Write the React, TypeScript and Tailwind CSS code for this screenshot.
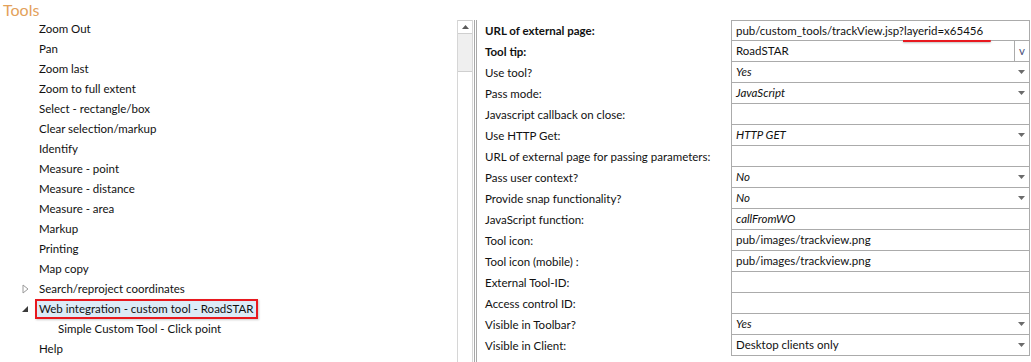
const treeItems = [
  { label: "Zoom Out" },
  { label: "Pan" },
  { label: "Zoom last" },
  { label: "Zoom to full extent" },
  { label: "Select - rectangle/box" },
  { label: "Clear selection/markup" },
  { label: "Identify" },
  { label: "Measure - point" },
  { label: "Measure - distance" },
  { label: "Measure - area" },
  { label: "Markup" },
  { label: "Printing" },
  { label: "Map copy" },
  { label: "Search/reproject coordinates", marker: "closed" },
  { label: "Web integration - custom tool - RoadSTAR", marker: "open", selected: true },
  { label: "Simple Custom Tool - Click point", child: true },
  { label: "Help" },
];

type Prop = {
  label: string;
  value?: string;
  bold?: boolean;
  italic?: boolean;
  dropdown?: boolean;
  button?: boolean;
  underline?: boolean;
};

const props: Prop[] = [
  { label: "URL of external page:", value: "pub/custom_tools/trackView.jsp?layerid=x65456", bold: true, underline: true },
  { label: "Tool tip:", value: "RoadSTAR", bold: true, button: true },
  { label: "Use tool?", value: "Yes", italic: true, dropdown: true },
  { label: "Pass mode:", value: "JavaScript", italic: true, dropdown: true },
  { label: "Javascript callback on close:" },
  { label: "Use HTTP Get:", value: "HTTP GET", italic: true, dropdown: true },
  { label: "URL of external page for passing parameters:" },
  { label: "Pass user context?", value: "No", italic: true, dropdown: true },
  { label: "Provide snap functionality?", value: "No", italic: true, dropdown: true },
  { label: "JavaScript function:", value: "callFromWO", italic: true },
  { label: "Tool icon:", value: "pub/images/trackview.png" },
  { label: "Tool icon (mobile) :", value: "pub/images/trackview.png" },
  { label: "External Tool-ID:" },
  { label: "Access control ID:" },
  { label: "Visible in Toolbar?", value: "Yes", italic: true, dropdown: true },
  { label: "Visible in Client:", value: "Desktop clients only", dropdown: true },
];

function DropArrow() {
  return (
    <svg width="7" height="4" viewBox="0 0 7 4" className="mr-[4px]">
      <path d="M0 0H7L3.5 4Z" fill="#6b6b6b" />
    </svg>
  );
}

function Tree() {
  return (
    <div className="w-[457px] shrink-0 flex flex-col">
      <div className="h-[19px] pl-[3px] text-[16px] leading-[19px] text-[#e3a15a]">Tools</div>
      {treeItems.map((item) => (
        <div key={item.label} className="h-[20px] flex items-center whitespace-nowrap">
          <div className="w-[35px] flex items-center justify-end pr-[6px]">
            {item.marker === "closed" && (
              <svg width="7" height="10" viewBox="0 0 7 10">
                <path d="M1 1L6 5L1 9Z" fill="none" stroke="#9a9a9a" />
              </svg>
            )}
            {item.marker === "open" && (
              <svg width="7" height="7" viewBox="0 0 7 7">
                <path d="M6 0V6H0Z" fill="#3a3a3a" />
              </svg>
            )}
          </div>
          {item.selected ? (
            <div className="h-[20px] w-[223px] flex items-center pl-[2px] border-2 border-[#e8191f] bg-[#dcebf7] text-[#111] shadow-[1px_1px_2px_rgba(0,0,0,0.2)]">
              {item.label}
            </div>
          ) : (
            <div className={`text-[#111] ${item.child ? "pl-[23px]" : "pl-[4px]"}`}>{item.label}</div>
          )}
        </div>
      ))}
    </div>
  );
}

function Scroller() {
  return (
    <div className="w-[16px] shrink-0 flex flex-col border-x border-[#d6d6d6]">
      <div className="h-[14px] flex items-center justify-center border-y border-[#cfcfcf] bg-white">
        <svg width="7" height="4" viewBox="0 0 7 4">
          <path d="M3.5 0L7 4H0Z" fill="#5a5a5a" />
        </svg>
      </div>
      <div className="h-[37px] bg-[#efefef]" />
      <div className="flex-1 bg-white border-t border-[#cfcfcf]" />
    </div>
  );
}

function PropertyGrid() {
  return (
    <div className="flex flex-col">
      {props.map((p, i) => (
        <div key={p.label} className="h-[21px] flex whitespace-nowrap">
          <div className={`w-[254px] pl-[8px] flex items-center text-[#111] ${p.bold ? "font-bold" : ""}`}>
            {p.label}
          </div>
          <div
            className={`w-[299px] flex items-center border-x border-b border-[#ababab] ${i === 0 ? "border-t" : ""} relative`}
          >
            <div className={`flex-1 pl-[4px] text-[#111] ${p.italic ? "italic" : ""}`}>{p.value}</div>
            {p.dropdown && <DropArrow />}
            {p.button && (
              <div className="w-[15px] h-full border-l border-[#ababab] flex items-center justify-center text-[#4a4f7a]">
                v
              </div>
            )}
            {p.underline && (
              <div className="absolute left-[171px] top-[19px] w-[88px] h-[2px] bg-[#e8191f] rounded-r-full shadow-[0_1px_2px_rgba(0,0,0,0.25)]" />
            )}
          </div>
        </div>
      ))}
    </div>
  );
}

export default function App() {
  return (
    <div className="w-[1031px] h-[362px] bg-white overflow-hidden flex text-[11.5px] font-['Lato','Noto_Sans',sans-serif]">
      <Tree />
      <div className="flex pt-[20px]">
        <Scroller />
        <div className="w-[1px] shrink-0" />
        <div className="w-[3px] shrink-0 border-x border-[#a8a8a8]" />
        <PropertyGrid />
      </div>
    </div>
  );
}
